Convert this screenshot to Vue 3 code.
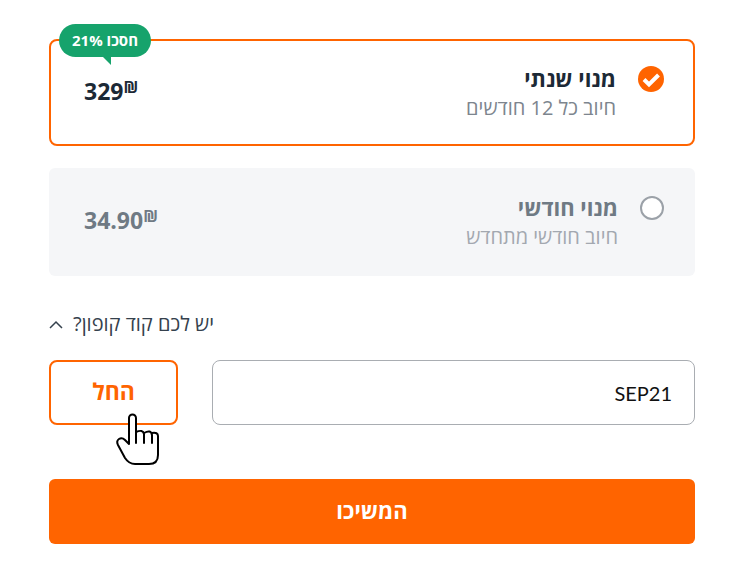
<script setup>
import { ref } from 'vue'

const plans = [
  { id: 'yearly', title: 'מנוי שנתי', note: 'חיוב כל 12 חודשים', price: '329', badge: 'חסכו 21%' },
  { id: 'monthly', title: 'מנוי חודשי', note: 'חיוב חודשי מתחדש', price: '34.90' },
]
const selected = ref('yearly')
const couponOpen = ref(true)
const coupon = ref('SEP21')
</script>

<template>
  <form class="checkout" dir="rtl" @submit.prevent>
    <label v-for="plan in plans" :key="plan.id" class="plan" :class="{ active: selected === plan.id }">
      <span class="mark">
        <input v-model="selected" type="radio" name="plan" :value="plan.id" />
        <svg v-if="selected === plan.id" class="check" viewBox="0 0 26 26" aria-hidden="true">
          <path d="M6 13.500 11 18.500 20.500 9" />
        </svg>
      </span>
      <span class="info">
        <span class="title">{{ plan.title }}</span>
        <span class="note">{{ plan.note }}</span>
      </span>
      <span class="price" dir="ltr">{{ plan.price }}<span class="currency">₪</span></span>
      <span v-if="plan.badge" class="badge">{{ plan.badge }}
        <svg class="tail" viewBox="0 0 10 9" aria-hidden="true"><path d="M0 0H9V9Z" /></svg>
      </span>
    </label>

    <button class="toggle" type="button" :aria-expanded="couponOpen" @click="couponOpen = !couponOpen">
      <span>יש לכם קוד קופון?</span>
      <svg class="chevron" viewBox="0 0 14 9" aria-hidden="true"><path d="M1 8 7 2l6 6" /></svg>
    </button>

    <div v-if="couponOpen" class="coupon">
      <input v-model="coupon" class="code" type="text" aria-label="קוד קופון" />
      <div class="apply-wrap">
        <button class="apply" type="button">החל</button>
        <svg class="pointer" viewBox="0 0 46 54" aria-hidden="true">
          <path class="fill" d="M15 32V6a3.500 3.500 0 0 1 7 0V19L44 22V43L36 52H21L11 46 3 31 8 26Z" />
          <path d="M22 31V6a3.500 3.500 0 0 0-7 0V32L11 28Q8 25 5 27 2 29 4 33L11 46Q15 52 21 52H35Q44 52 44 43V24Q44 20 38 21" />
          <path d="M22 20Q29 17 30 22V31M30 21Q37 17 38 23V31" />
        </svg>
      </div>
    </div>

    <button class="submit" type="submit">המשיכו</button>
  </form>
</template>

<style>
body {
  margin: 0;
  background: #fff;
}
</style>

<style scoped>
.checkout {
  display: flex;
  flex-direction: column;
  gap: 22px;
  padding: 39px 37px 24px 49px;
  font-family: "Open Sans", "Noto Sans", sans-serif;
  color: #1c2936;
}
.checkout * {
  box-sizing: border-box;
}
button,
input {
  font-family: inherit;
  margin: 0;
}
button {
  cursor: pointer;
}
.plan {
  position: relative;
  display: flex;
  gap: 22px;
  padding: 24px 31px 24px 35px;
  background: #f5f6f8;
  border-radius: 6px;
  color: #6f7a84;
}
.plan.active {
  padding: 22px 29px 21px 33px;
  background: #fff;
  border: 2px solid #ff6400;
  border-radius: 8px;
  color: #1c2936;
}
.mark {
  display: grid;
  align-self: flex-start;
  margin-top: 4px;
}
.mark > * {
  grid-area: 1 / 1;
}
.mark input {
  appearance: none;
  width: 24px;
  height: 24px;
  border: 2px solid #9ba1a8;
  border-radius: 50%;
  background: #fff;
}
.active .mark {
  margin-top: 3px;
}
.active .mark input {
  width: 26px;
  height: 26px;
  border: 0;
  background: #ff6400;
}
.check {
  width: 26px;
  height: 26px;
  fill: none;
  stroke: #fff;
  stroke-width: 4;
  pointer-events: none;
}
.info {
  display: flex;
  flex: 1;
  flex-direction: column;
}
.title {
  font-size: 22px;
  font-weight: 700;
  line-height: 30px;
}
.note {
  font-size: 20px;
  line-height: 30px;
  color: #a3a8b0;
}
.active .note {
  color: #7d858e;
}
.price {
  display: flex;
  align-self: flex-start;
  font-size: 23px;
  font-weight: 700;
  line-height: 30px;
  margin-top: 13px;
}
.currency {
  font-size: 16px;
  line-height: 22px;
}
.badge {
  position: absolute;
  top: -17px;
  left: 8px;
  padding: 0 13px;
  border-radius: 17px;
  background: #16a36c;
  color: #fff;
  font-size: 15px;
  font-weight: 700;
  line-height: 33px;
}
.tail {
  position: absolute;
  top: 32px;
  left: 43px;
  width: 10px;
  height: 9px;
  fill: #16a36c;
}
.toggle {
  display: flex;
  align-items: center;
  align-self: flex-end;
  gap: 10px;
  margin-top: 12px;
  padding: 0;
  border: 0;
  background: none;
  color: #35414d;
  font-size: 20px;
  line-height: 28px;
}
.chevron {
  width: 14px;
  height: 9px;
  fill: none;
  stroke: #35414d;
  stroke-width: 1.5;
}
.coupon {
  display: flex;
  gap: 34px;
  margin-bottom: 32px;
}
.code {
  flex: 1;
  min-width: 0;
  height: 65px;
  padding: 0 22px;
  border: 1px solid #a9adb2;
  border-radius: 8px;
  background: #fff;
  color: #111;
  font-family: Lato, "Open Sans", sans-serif;
  font-size: 20px;
}
.apply-wrap {
  position: relative;
  flex: 0 0 129px;
}
.apply {
  width: 100%;
  height: 65px;
  padding: 0 0 4px;
  border: 2px solid #ff6400;
  border-radius: 8px;
  background: #fff;
  color: #ff6400;
  font-size: 23px;
  font-weight: 700;
}
.pointer {
  position: absolute;
  top: 52px;
  left: 65px;
  width: 46px;
  height: 54px;
  fill: none;
  stroke: #000;
  stroke-width: 2;
  stroke-linecap: round;
  stroke-linejoin: round;
  pointer-events: none;
}
.pointer .fill {
  fill: #fff;
  stroke: none;
}
.submit {
  height: 65px;
  padding: 0 0 4px;
  border: 0;
  border-radius: 6px;
  background: #ff6400;
  color: #fff;
  font-size: 22px;
  font-weight: 700;
}
</style>
